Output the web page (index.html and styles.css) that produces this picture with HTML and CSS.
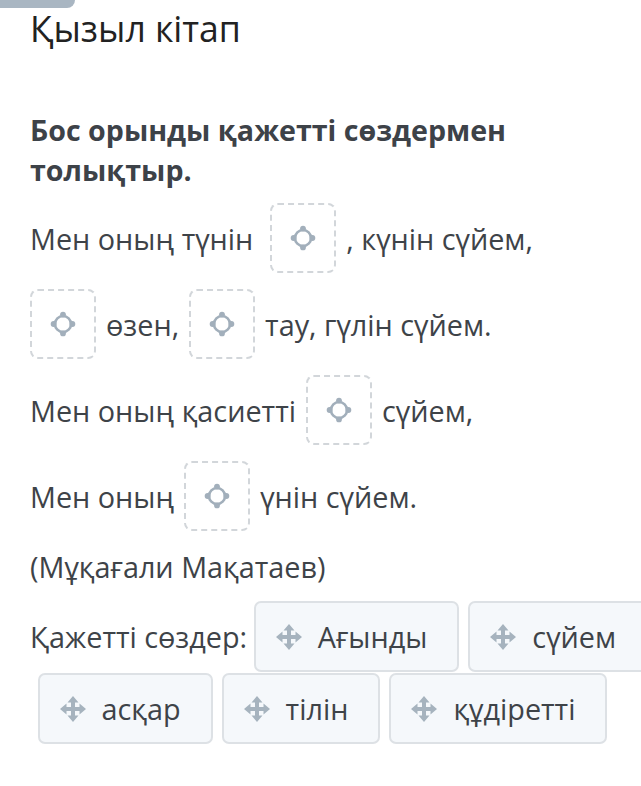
FILE: index.html
```html
<!DOCTYPE html>
<html lang="kk">
<head>
    <meta charset="UTF-8">
    <meta name="viewport" content="width=device-width, initial-scale=1.0">
    <title>Қызыл кітап</title>
    <link rel="stylesheet" href="styles.css">
</head>
<body>
    <div class="tab"></div>
    <div class="container">
        <h1>Қызыл кітап</h1>
        <h2>Бос орынды қажетті сөздермен толықтыр.</h2>

        <div class="poem">
            <div class="line"><span class="pad">Мен оның түнін</span><span class="drop"></span><span>, күнін сүйем,</span></div>
            <div class="line"><span class="drop"></span><span>өзен,</span><span class="drop"></span><span>тау, гүлін сүйем.</span></div>
            <div class="line"><span>Мен оның қасиетті</span><span class="drop"></span><span>сүйем,</span></div>
            <div class="line"><span>Мен оның</span><span class="drop"></span><span>үнін сүйем.</span></div>
        </div>

        <p class="author">(Мұқағали Мақатаев)</p>

        <div class="words">
            <span class="label">Қажетті сөздер:</span>
            <span class="chip">Ағынды</span>
            <span class="chip">сүйем</span>
            <span class="chip">асқар</span>
            <span class="chip">тілін</span>
            <span class="chip">құдіретті</span>
        </div>
    </div>

    <script>
        const target = '<svg width="26" height="26" viewBox="0 0 26 26"><circle cx="13" cy="13" r="8" fill="none" stroke="#a2afbb" stroke-width="2.6"/><circle cx="13" cy="3.6" r="2.9" fill="#a2afbb"/><circle cx="13" cy="22.4" r="2.9" fill="#a2afbb"/><circle cx="3.6" cy="13" r="2.9" fill="#a2afbb"/><circle cx="22.4" cy="13" r="2.9" fill="#a2afbb"/></svg>';
        const move = '<svg width="28" height="28" viewBox="0 0 28 28"><path d="M12 7h4v5h5v4h-5v5h-4v-5H7v-4h5z" fill="#a6b3be"/><path d="M14 1l5.5 6.5h-11zM14 27l5.5-6.5h-11zM1 14l6.5-5.5v11zM27 14l-6.5-5.5v11z" fill="#a6b3be"/></svg>';

        document.querySelectorAll('.drop').forEach(el => el.innerHTML = target);
        document.querySelectorAll('.chip').forEach(el => {
            el.innerHTML = '<span class="ico">' + move + '</span>' + el.textContent;
        });
    </script>
</body>
</html>
```

FILE: styles.css
```css
body {
    font-family: "Open Sans", "Noto Sans", sans-serif;
    background-color: #ffffff;
    margin: 0;
    padding: 0;
    color: #3e4348;
    overflow: hidden;
}
.tab {
    width: 75px;
    height: 8px;
    background: #a9b6c2;
    border-bottom-right-radius: 8px;
}
.container {
    padding: 0 0 0 30px;
}
h1 {
    margin: 0;
    font-size: 35.6px;
    font-weight: 400;
    line-height: 40px;
    color: #222222;
}
h2 {
    margin: 62px 0 0;
    font-size: 28.6px;
    font-weight: 700;
    line-height: 40px;
    color: #3d4248;
    max-width: 560px;
}
.poem {
    margin-top: 5px;
}
.line {
    display: flex;
    align-items: center;
    gap: 10px;
    height: 86px;
    font-size: 28.8px;
}
.pad {
    margin-right: 7px;
}
.drop {
    width: 66px;
    height: 70px;
    box-sizing: border-box;
    border: 2px dashed #d2d6da;
    border-radius: 8px;
    display: flex;
    align-items: center;
    justify-content: center;
}
.author {
    margin: 0;
    font-size: 28.8px;
    line-height: 56px;
}
.words {
    display: flex;
    flex-wrap: wrap;
    align-items: center;
    font-size: 28.8px;
    margin: 6px -60px 0 0;
    padding-left: 3px;
    row-gap: 1px;
}
.label {
    margin: 0 2px 0 -3px;
}
.chip {
    display: flex;
    align-items: center;
    gap: 15px;
    height: 71px;
    box-sizing: border-box;
    padding: 0 30px 0 19px;
    margin: 0 4.5px;
    background: #f5f8fb;
    border: 2px solid #dde1e5;
    border-radius: 7px;
}
.ico {
    display: flex;
}
```
